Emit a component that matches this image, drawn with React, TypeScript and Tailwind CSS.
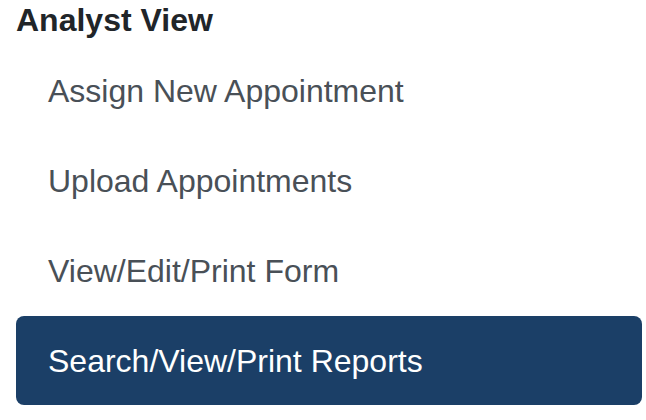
const items = [
  "Assign New Appointment",
  "Upload Appointments",
  "View/Edit/Print Form",
  "Search/View/Print Reports",
]

const active = "Search/View/Print Reports"

export default function App() {
  return (
    <div className="min-h-[420px] w-[646px] bg-white pl-4 pr-1 font-['Liberation_Sans',Arial,sans-serif]">
      {/* Section title */}
      <h2 className="mb-[6px] text-[32px] font-bold leading-[40px] text-[#212529]">Analyst View</h2>

      {/* Nav list */}
      <nav className="flex flex-col gap-px">
        {items.map((label) => (
          <a
            key={label}
            href="#"
            className={
              label === active
                ? "block h-[89px] rounded-lg bg-[#1b3f67] pl-8 pt-[21px] text-[32px] leading-[48px] text-white"
                : "block h-[89px] rounded-lg pl-8 pt-[21px] text-[32px] leading-[48px] text-[#495057]"
            }
          >
            {label}
          </a>
        ))}
      </nav>
    </div>
  )
}
